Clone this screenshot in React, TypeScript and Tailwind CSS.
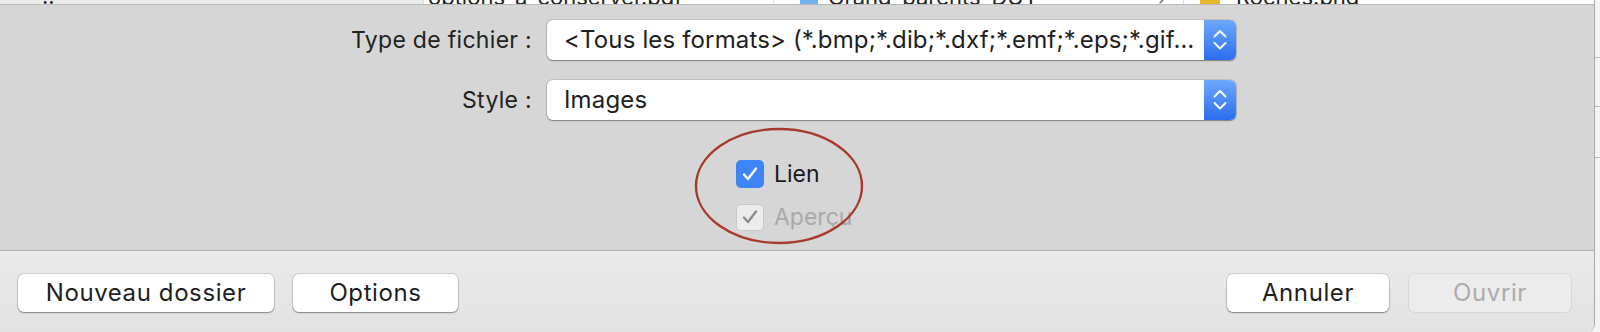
import React from "react";

function Stepper() {
  return (
    <div className="flex h-full w-[32px] shrink-0 items-center justify-center rounded-r-[6px] bg-linear-to-b from-[#6ca9fb] to-[#2c6cf0]">
      <svg width="14" height="22" viewBox="0 0 14 22" fill="none" stroke="white" strokeWidth="1.8" strokeLinecap="round" strokeLinejoin="round">
        <path d="M1.5 7.5 L7 2 L12.5 7.5" />
        <path d="M1.5 14 L7 19.5 L12.5 14" />
      </svg>
    </div>
  );
}

function Select({ value }: { value: string }) {
  return (
    <div className="flex h-[40px] w-[689px] rounded-[6px] bg-white shadow-[0_0_0_1px_rgba(0,0,0,0.1),0_1px_1.5px_rgba(0,0,0,0.35)]">
      <div className="flex-1 overflow-hidden whitespace-nowrap pl-[17px] text-[24px] leading-[40px] tracking-[0.15px] text-[#1e1e1e]">
        {value}
      </div>
      <Stepper />
    </div>
  );
}

function Check({ label, on }: { label: string; on: boolean }) {
  return (
    <div className="flex items-center gap-[10px]">
      {on ? (
        <div className="flex h-[28px] w-[28px] items-center justify-center rounded-[5px] bg-[#3d84f6]">
          <svg width="18" height="16" viewBox="0 0 18 16" fill="none" stroke="white" strokeWidth="2.4" strokeLinecap="round" strokeLinejoin="round">
            <path d="M3 8.5 L7 13 L15 2.5" />
          </svg>
        </div>
      ) : (
        <div className="flex h-[27px] w-[28px] items-center justify-center rounded-[5px] border border-[#c9c9c9] bg-[#ececec]">
          <svg width="18" height="16" viewBox="0 0 18 16" fill="none" stroke="#8d8d8d" strokeWidth="2.4" strokeLinecap="round" strokeLinejoin="round">
            <path d="M3 8.5 L7 13 L15 2.5" />
          </svg>
        </div>
      )}
      <span className={"text-[23px] leading-[28px] " + (on ? "text-[#1a1a1a]" : "text-[#a9a9a9]")}>{label}</span>
    </div>
  );
}

function Button({ children, width, disabled }: { children: React.ReactNode; width: string; disabled?: boolean }) {
  return (
    <div
      className={
        "flex h-[38px] items-center justify-center rounded-[6px] text-[24px] tracking-[0.6px] " +
        width +
        (disabled
          ? " bg-[#ececec] text-[#ababab] shadow-[0_0_0_1px_rgba(0,0,0,0.06)]"
          : " bg-white text-[#1e1e1e] shadow-[0_0_0_1px_rgba(0,0,0,0.1),0_1px_1.5px_rgba(0,0,0,0.35)]")
      }
    >
      {children}
    </div>
  );
}

export default function App() {
  return (
    <div className="flex h-[332px] w-[1600px] overflow-hidden bg-[#f3f3f3] font-['Inter','Liberation_Sans',sans-serif]">
      <div className="flex w-[1595px] flex-col overflow-hidden rounded-br-[8px] border-r border-[#a8a8a8]">
        {/* file browser columns, cut off */}
        <div className="flex h-[5px] shrink-0 overflow-hidden border-b border-[#b9b9b9] text-[22px] leading-[24px] text-[#222]">
          <div className="w-[423px] bg-[#ebebeb] pl-[42px]">
            <div className="-mt-[16px]">..</div>
          </div>
          <div className="w-[350px] border-l border-[#dcdcdc] bg-white pl-[4px]">
            <div className="-mt-[15px] whitespace-nowrap">options_a_conserver.pdf</div>
          </div>
          <div className="flex w-[410px] border-l border-[#dcdcdc] bg-white">
            <div className="ml-[26px] w-[18px] bg-[#6eb2ee]"></div>
            <div className="-mt-[15px] ml-[10px] w-[330px] whitespace-nowrap">Grand_parents_DUT</div>
            <div className="-mt-[15px] text-[#777]">›</div>
          </div>
          <div className="flex flex-1 border-l border-[#dcdcdc] bg-white">
            <div className="ml-[16px] w-[20px] bg-[#e8b72e]"></div>
            <div className="-mt-[15px] ml-[16px] whitespace-nowrap">Roches.png</div>
          </div>
        </div>

        {/* options area */}
        <div className="relative h-[246px] shrink-0 border-b border-[#b1b1b1] bg-[#d6d6d6] pt-[15px]">
          <div className="grid grid-cols-[532px_689px] items-center gap-x-[15px] gap-y-[20px] text-[23px] tracking-[0.3px] text-[#222]">
            <div className="text-right">Type de fichier :</div>
            <Select value="<Tous les formats> (*.bmp;*.dib;*.dxf;*.emf;*.eps;*.gif…" />
            <div className="text-right">Style :</div>
            <Select value="Images" />
          </div>
          <div className="ml-[736px] mt-[40px] flex flex-col gap-[15px]">
            <Check label="Lien" on />
            <Check label="Aperçu" on={false} />
          </div>
          <svg className="absolute left-[694px] top-[122px]" width="170" height="118" viewBox="0 0 170 118" fill="none">
            <ellipse cx="85" cy="59" rx="83" ry="57" stroke="#a63a2c" strokeWidth="2.4" />
          </svg>
        </div>

        {/* buttons */}
        <div className="flex flex-1 items-start justify-between bg-linear-to-b from-[#eaeaea] to-[#e2e2e2] px-[18px] pt-[23px] pr-[23px]">
          <div className="flex gap-[19px]">
            <Button width="w-[256px]">Nouveau dossier</Button>
            <Button width="w-[165px]">Options</Button>
          </div>
          <div className="flex gap-[20px]">
            <Button width="w-[162px]">Annuler</Button>
            <Button width="w-[162px]" disabled>
              Ouvrir
            </Button>
          </div>
        </div>
      </div>
      <div className="flex flex-1 flex-col">
        <div className="mt-[57px] h-px w-full bg-[#bdbdbd]"></div>
        <div className="mt-[48px] h-px w-full bg-[#bdbdbd]"></div>
        <div className="mt-[50px] h-px w-full bg-[#bdbdbd]"></div>
      </div>
    </div>
  );
}
